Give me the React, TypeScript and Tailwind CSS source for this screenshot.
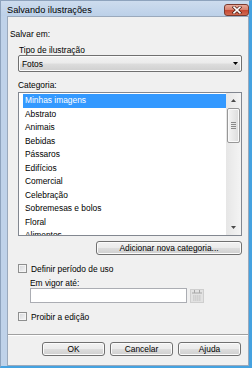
import React from "react";

const items = [
  "Minhas imagens",
  "Abstrato",
  "Animais",
  "Bebidas",
  "Pássaros",
  "Edifícios",
  "Comercial",
  "Celebração",
  "Sobremesas e bolos",
  "Floral",
  "Alimentos",
];

function Btn({ children, className = "" }: { children: React.ReactNode; className?: string }) {
  return (
    <div
      className={`h-[14px] flex items-center justify-center rounded-[3px] border border-[#707070] bg-[linear-gradient(#f2f2f2_0%,#ebebeb_48%,#dddddd_52%,#cfcfcf_100%)] shadow-[inset_0_0_0_1px_#fbfbfb] leading-[10px] text-black ${className}`}
    >
      {children}
    </div>
  );
}

function Check() {
  return (
    <div className="w-[9px] h-[9px] shrink-0 border border-[#8e8f8f] bg-[linear-gradient(135deg,#d3d5d8,#f8f8f8)] shadow-[inset_0_0_0_1px_#f4f4f4]" />
  );
}

function Tri({ up = false, color = "#000" }: { up?: boolean; color?: string }) {
  return (
    <svg width="5" height="3" viewBox="0 0 5 3">
      <path d={up ? "M0 3 L5 3 L2.5 0 Z" : "M0 0 L5 0 L2.5 3 Z"} fill={color} />
    </svg>
  );
}

function Scrollbar() {
  return (
    <div className="w-[15px] h-full flex flex-col bg-[linear-gradient(90deg,#e6e6e6,#f4f4f4)]">
      <div className="h-[15px] flex items-center justify-center">
        <Tri up color="#4a4a4a" />
      </div>
      <div className="h-[35px] mx-[1px] rounded-[2px] border border-[#979797] bg-[linear-gradient(90deg,#f4f4f4,#dcdcdc)] shadow-[inset_0_0_0_1px_#fafafa] flex flex-col items-center justify-center gap-[1px]">
        <div className="w-[5px] h-[1px] bg-[#8a8a8a]" />
        <div className="w-[5px] h-[1px] bg-[#8a8a8a]" />
        <div className="w-[5px] h-[1px] bg-[#8a8a8a]" />
        <div className="w-[5px] h-[1px] bg-[#8a8a8a]" />
      </div>
      <div className="flex-1" />
      <div className="h-[15px] flex items-center justify-center">
        <Tri color="#4a4a4a" />
      </div>
    </div>
  );
}

function CalendarIcon() {
  return (
    <svg width="14" height="14" viewBox="0 0 14 14">
      <rect x="0.5" y="0.5" width="13" height="13" fill="#e2e2e2" stroke="#cecece" />
      <rect x="2" y="3" width="10" height="2" fill="#c4c4c4" />
      <rect x="4" y="1" width="1" height="3" fill="#a8a8a8" />
      <rect x="9" y="1" width="1" height="3" fill="#a8a8a8" />
      {[6.5, 8.5, 10.5].map((y) =>
        [3, 5, 7, 9].map((x) => (
          <rect key={`${x}-${y}`} x={x} y={y} width="1.5" height="1" fill="#bdbdbd" />
        ))
      )}
    </svg>
  );
}

export default function App() {
  return (
    <div className="w-[252px] h-[368px] flex flex-col border-t border-l border-t-[#8ea3bd] border-l-[#8ea3bd] border-r-[3px] border-b-[2px] border-r-[#45a2e0] border-b-[#45a2e0] bg-[#bfd2e9] font-['Liberation_Sans',Arial,sans-serif] text-[8.4px] text-black overflow-hidden">
      {/* Title bar */}
      <div className="h-[15px] shrink-0 flex items-start justify-between pl-[6px] bg-[linear-gradient(#cddcee,#bcd0e8)]">
        <div className="pt-[2px] leading-[15px] text-[9.2px] text-black h-[15px]">Salvando ilustrações</div>
        <div className="self-end w-[25px] h-[12px] rounded-[3px] border border-[#7a3a2e] bg-[linear-gradient(#e9aa9a_0%,#d88370_45%,#c64a34_55%,#d26a52_100%)] flex items-center justify-center">
          <svg width="10" height="8" viewBox="0 0 10 8">
            <path d="M2 1.2 L8 6.8 M8 1.2 L2 6.8" stroke="#4a1d15" strokeWidth="3" strokeLinecap="square" />
            <path d="M2 1.2 L8 6.8 M8 1.2 L2 6.8" stroke="#ffffff" strokeWidth="1.6" strokeLinecap="square" />
          </svg>
        </div>
      </div>

      {/* Body */}
      <div className="flex-1 flex pl-[6px]">
        <div className="w-[242px] h-full border border-[#9aa9bc] bg-[#f0f0f0] flex flex-col">
          <div className="mt-[12px] ml-[2px] h-[10px] leading-[10px]">Salvar em:</div>

          <div className="ml-[10px] w-[224px] flex flex-col">
            <div className="mt-[6px] ml-[1px] h-[10px] leading-[10px]">Tipo de ilustração</div>
            <div className="h-[17px] flex items-center justify-between pl-[3px] pr-[3px] rounded-[2px] border border-[#707070] bg-[linear-gradient(#f2f2f2_0%,#ebebeb_48%,#dddddd_52%,#cfcfcf_100%)] shadow-[inset_0_0_0_1px_#fbfbfb]">
              <span className="leading-[10px] pt-[1px]">Fotos</span>
              <Tri />
            </div>

            <div className="mt-[8px] h-[10px] leading-[10px]">Categoria:</div>
            <div className="mt-[2px] h-[144px] border border-[#828790] bg-white flex">
              <div className="flex-1 overflow-hidden pl-[4px] pt-[1px]">
                {items.map((t, i) => (
                  <div
                    key={t}
                    className={
                      i === 0
                        ? "h-[13.5px] leading-[13.5px] pl-[2px] bg-[#3399ff] text-white whitespace-nowrap"
                        : "h-[13.5px] leading-[13.5px] pl-[2px] whitespace-nowrap"
                    }
                  >
                    {t}
                  </div>
                ))}
              </div>
              <Scrollbar />
            </div>

            <Btn className="mt-[5px] w-[146px] self-end">Adicionar nova categoria...</Btn>

            <div className="mt-[9px] h-[9px] flex items-center gap-[4px]">
              <Check />
              <span className="leading-[10px] whitespace-nowrap">Definir período de uso</span>
            </div>

            <div className="mt-[5px] ml-[12px] h-[10px] leading-[10px]">Em vigor até:</div>
            <div className="ml-[12px] h-[15px] flex items-center gap-[3px]">
              <div className="w-[157px] h-[15px] border border-[#abadb3] bg-white" />
              <CalendarIcon />
            </div>

            <div className="mt-[9px] h-[9px] flex items-center gap-[4px]">
              <Check />
              <span className="leading-[10px] whitespace-nowrap">Proibir a edição</span>
            </div>
          </div>

          <div className="mt-[13px] h-[2px] border-t border-t-[#a0a0a0] border-b border-b-white" />

          <div className="mt-[6px] flex justify-end gap-[5px] pr-[7px]">
            <Btn className="w-[63px]">OK</Btn>
            <Btn className="w-[63px]">Cancelar</Btn>
            <Btn className="w-[63px]">Ajuda</Btn>
          </div>
        </div>
      </div>
    </div>
  );
}
